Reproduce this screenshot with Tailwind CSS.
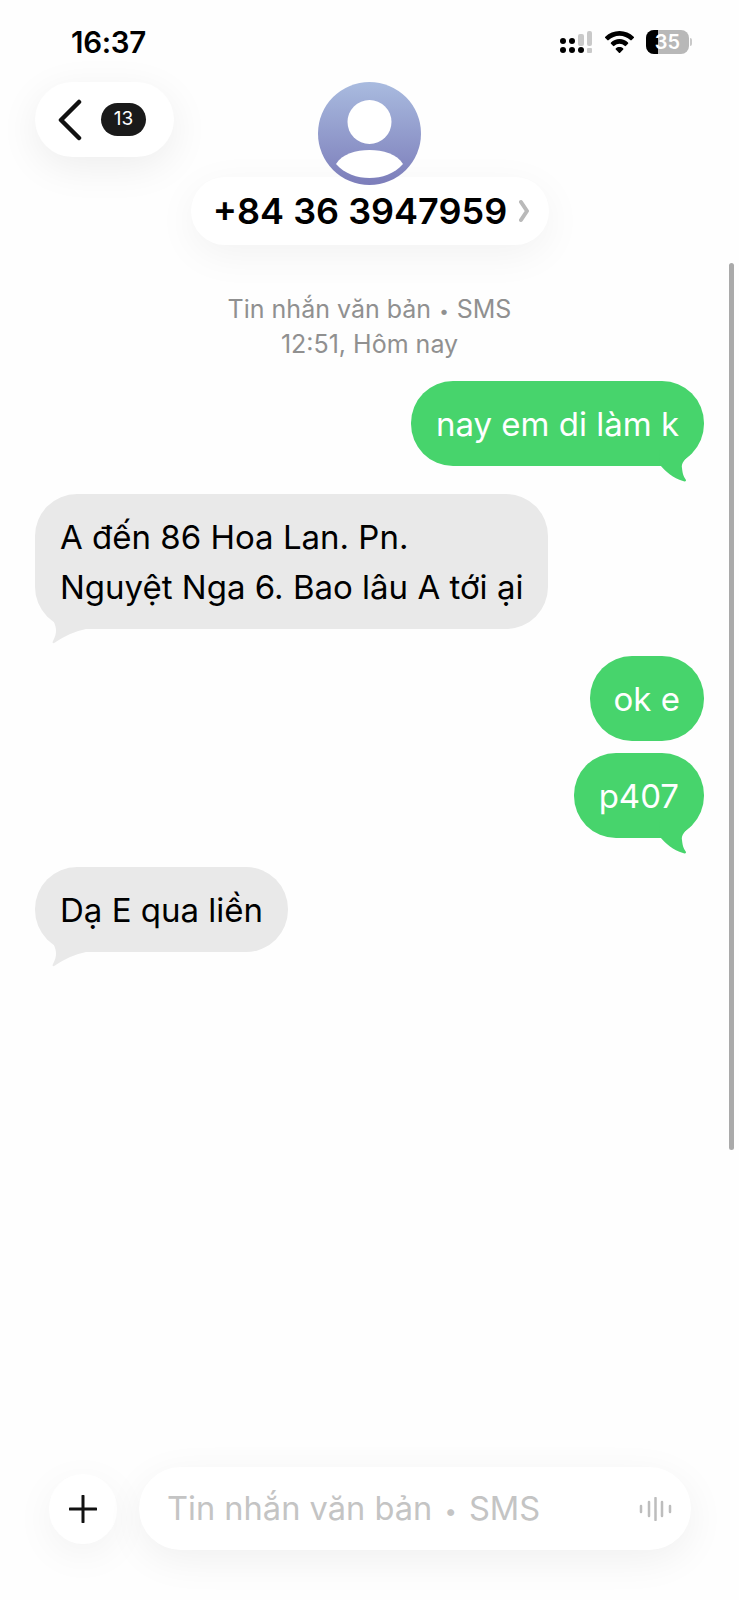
<!DOCTYPE html>
<html lang="vi">

<head>
  <meta charset="UTF-8" />
  <script src="https://cdn.jsdelivr.net/npm/@tailwindcss/browser@4"></script>
  <title>Tin nhắn</title>
</head>

<body class="bg-[#fefefe]">
  <div class="relative flex flex-col h-[1600px] w-[739px] overflow-hidden font-['Inter',sans-serif] text-black">
    <!-- Status bar -->
    <div class="flex items-start justify-between h-[82px] pt-[26px] pl-[71px] pr-[47px]">
      <span class="text-[29.500px] leading-[32px] font-semibold tracking-[-0.3px]">16:37</span>
      <div class="flex items-center gap-[12px] h-[32px]">
        <svg width="34" height="24" viewBox="0 0 34 24">
          <circle cx="4" cy="11" r="3" fill="#000" />
          <circle cx="4" cy="20" r="3" fill="#000" />
          <circle cx="13" cy="11" r="3" fill="#000" />
          <circle cx="13" cy="20" r="3" fill="#000" />
          <circle cx="22" cy="20" r="3" fill="#000" />
          <rect x="19" y="4" width="6" height="12" rx="2" fill="#c9c9c9" />
          <rect x="28" y="1" width="5" height="15" rx="2" fill="#c9c9c9" />
          <rect x="28" y="18" width="5" height="5" rx="1" fill="#c9c9c9" />
        </svg>
        <svg width="29" height="22" viewBox="0 0 29 22">
          <path d="M14.5 0C9 0 4 2.2.3 5.7a1 1 0 0 0 0 1.4l2 2a1 1 0 0 0 1.4 0C6.600 6.300 10.400 4.700 14.500 4.700s7.900 1.600 10.800 4.400a1 1 0 0 0 1.400 0l2-2a1 1 0 0 0 0-1.400C25 2.200 20 0 14.500 0Z" fill="#000" />
          <path d="M14.500 8c-3.300 0-6.300 1.300-8.500 3.400a1 1 0 0 0 0 1.400l2 2a1 1 0 0 0 1.400 0c1.400-1.200 3.100-2 5.100-2s3.700.8 5.100 2a1 1 0 0 0 1.400 0l2-2a1 1 0 0 0 0-1.400C20.800 9.300 17.800 8 14.500 8Z" fill="#000" />
          <path d="M14.500 16c-1.400 0-2.700.5-3.700 1.400a.8.8 0 0 0 0 1.100l3.100 3.200a.8.8 0 0 0 1.200 0l3.100-3.200a.8.8 0 0 0 0-1.100c-1-.9-2.300-1.400-3.700-1.400Z" fill="#000" />
        </svg>
        <div class="relative flex items-center">
          <div class="relative flex items-center justify-center w-[43px] h-[24px] rounded-[8px] bg-[#b8b8b8] overflow-hidden">
            <div class="absolute left-0 top-0 bottom-0 w-[12px] bg-black"></div>
            <span class="relative text-[20px] leading-[24px] font-semibold text-white">35</span>
          </div>
          <div class="w-[2px] h-[8px] ml-[1px] rounded-r-full bg-[#c9c9c9]"></div>
        </div>
      </div>
    </div>

    <!-- Header -->
    <header class="relative flex flex-col items-center">
      <div class="absolute left-[35px] top-0 flex items-center w-[139px] h-[75px] pl-[22px] gap-[18px] rounded-full bg-white shadow-[0_10px_40px_rgba(0,0,0,0.07)]">
        <svg width="26" height="42" viewBox="0 0 26 42" fill="none">
          <path d="M22 3 4 21l18 18" stroke="#111" stroke-width="4.500" stroke-linecap="round" stroke-linejoin="round" />
        </svg>
        <span class="flex items-center justify-center w-[45px] h-[33px] rounded-full bg-[#1a1a1a] text-white text-[19px] font-normal">13</span>
      </div>
      <svg class="relative z-10" width="103" height="103" viewBox="0 0 103 103">
        <defs>
          <linearGradient id="avatarFill" x1="0" y1="0" x2="0" y2="1">
            <stop offset="0" stop-color="#a9bbdf" />
            <stop offset="1" stop-color="#7c7dba" />
          </linearGradient>
        </defs>
        <circle cx="51.500" cy="51.500" r="51.500" fill="url(#avatarFill)" />
        <circle cx="51.500" cy="40" r="22" fill="#fff" />
        <path d="M18 82C24 72 38 68 51.500 68S79 72 85 82C76 92 64 96 51.500 96S27 92 18 82Z" fill="#fff" />
      </svg>
      <div class="relative flex items-center justify-center gap-[12px] w-[358px] h-[68px] -mt-[8px] pl-[4px] rounded-full bg-white shadow-[0_10px_40px_rgba(0,0,0,0.05)]">
        <span class="text-[36px] leading-[40px] font-semibold">+84 36 3947959</span>
        <svg width="11" height="24" viewBox="0 0 11 24" fill="none">
          <path d="M2 3 8 12 2 21" stroke="#b9b9b9" stroke-width="4" stroke-linecap="round" stroke-linejoin="round" />
        </svg>
      </div>
    </header>

    <!-- Messages -->
    <main class="flex flex-col flex-1 px-[35px]">
      <p class="mt-[47px] text-center text-[25px] leading-[35px] text-[#909090]">
        Tin nhắn văn bản <span class="relative -top-[1px] text-[17px] leading-none mx-[1px]">•</span> SMS<br>12:51, Hôm nay
      </p>

      <div class="relative self-end mt-[19px] px-[25px] py-[17.500px] rounded-[42px] bg-[#47d46c] text-white text-[33px] leading-[50px]">
        nay em di làm k
        <svg class="absolute right-[12px] bottom-[-16px]" width="33" height="32" viewBox="0 0 33 32">
          <path d="M0 0H33L31 5C26 9 22 13 23 18 23.500 24 25 27 27 30 27 32 25 31.500 24 31 14 28 7 22 1 15Z" fill="#47d46c" />
        </svg>
      </div>

      <div class="relative self-start mt-[28px] px-[25px] py-[17.500px] rounded-[42px] bg-[#e9e9e9] text-[33px] leading-[50px]">
        A đến 86 Hoa Lan. Pn.<br>Nguyệt Nga 6. Bao lâu A tới ại
        <svg class="absolute left-[17px] bottom-[-15px]" width="34" height="28" viewBox="0 0 34 28">
          <path d="M0 0H34V13C24 15 12 20 3 26.500 1 28 0 27 1 25 4 20 5 14 3 9Z" fill="#e9e9e9" />
        </svg>
      </div>

      <div class="self-end mt-[27px] px-[24px] py-[17.500px] rounded-[42px] bg-[#47d46c] text-white text-[33px] leading-[50px]">
        ok e
      </div>

      <div class="relative self-end mt-[12px] px-[25px] py-[17.500px] rounded-[42px] bg-[#47d46c] text-white text-[33px] leading-[50px]">
        p407
        <svg class="absolute right-[12px] bottom-[-16px]" width="33" height="32" viewBox="0 0 33 32">
          <path d="M0 0H33L31 5C26 9 22 13 23 18 23.500 24 25 27 27 30 27 32 25 31.500 24 31 14 28 7 22 1 15Z" fill="#47d46c" />
        </svg>
      </div>

      <div class="relative self-start mt-[29px] px-[25px] py-[17.500px] rounded-[42px] bg-[#e9e9e9] text-[33px] leading-[50px]">
        Dạ E qua liền
        <svg class="absolute left-[17px] bottom-[-15px]" width="34" height="28" viewBox="0 0 34 28">
          <path d="M0 0H34V13C24 15 12 20 3 26.500 1 28 0 27 1 25 4 20 5 14 3 9Z" fill="#e9e9e9" />
        </svg>
      </div>
    </main>

    <!-- Input bar -->
    <div class="flex items-center gap-[22px] pl-[49px] pb-[50px]">
      <div class="flex items-center justify-center w-[68px] h-[70px] rounded-full bg-white shadow-[0_10px_40px_rgba(0,0,0,0.05)]">
        <svg width="28" height="28" viewBox="0 0 28 28" fill="none">
          <path d="M14 1v26M1 14h26" stroke="#111" stroke-width="3" stroke-linecap="round" />
        </svg>
      </div>
      <div class="flex items-center justify-between w-[552px] h-[83px] pl-[28px] pr-[19px] rounded-[42px] bg-white shadow-[0_10px_40px_rgba(0,0,0,0.06)]">
        <span class="text-[32.600px] text-[#c4c4c4]">Tin nhắn văn bản <span class="relative -top-[1px] text-[22px] leading-none mx-[3px]">•</span> SMS</span>
        <svg width="33" height="24" viewBox="0 0 33 24" fill="none" stroke="#bdbdbd" stroke-width="2.500" stroke-linecap="round">
          <path d="M2 9v6M10 5v14M16.500 1v22M23 5v14M31 9v6" />
        </svg>
      </div>
    </div>

    <!-- Scroll indicator -->
    <div class="absolute left-[729px] top-[263px] w-[5px] h-[887px] rounded-full bg-[#aaaaaa]"></div>
  </div>
</body>
</html>
